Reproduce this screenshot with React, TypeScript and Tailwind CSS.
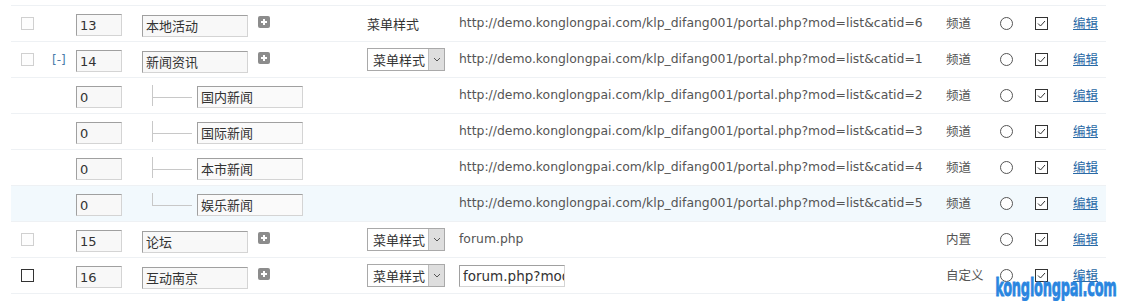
import React from "react";

type Row = {
  check?: "light" | "dark";
  toggle?: boolean;
  order: string;
  name: string;
  child?: "mid" | "last";
  plus?: boolean;
  type?: "text" | "select";
  url: string;
  urlInput?: boolean;
  kind: string;
  hl?: boolean;
};

const rows: Row[] = [
  { check: "light", order: "13", name: "本地活动", plus: true, type: "text", url: "http://demo.konglongpai.com/klp_difang001/portal.php?mod=list&catid=6", kind: "频道" },
  { check: "light", toggle: true, order: "14", name: "新闻资讯", plus: true, type: "select", url: "http://demo.konglongpai.com/klp_difang001/portal.php?mod=list&catid=1", kind: "频道" },
  { order: "0", name: "国内新闻", child: "mid", url: "http://demo.konglongpai.com/klp_difang001/portal.php?mod=list&catid=2", kind: "频道" },
  { order: "0", name: "国际新闻", child: "mid", url: "http://demo.konglongpai.com/klp_difang001/portal.php?mod=list&catid=3", kind: "频道" },
  { order: "0", name: "本市新闻", child: "mid", url: "http://demo.konglongpai.com/klp_difang001/portal.php?mod=list&catid=4", kind: "频道" },
  { order: "0", name: "娱乐新闻", child: "last", url: "http://demo.konglongpai.com/klp_difang001/portal.php?mod=list&catid=5", kind: "频道", hl: true },
  { check: "light", order: "15", name: "论坛", plus: true, type: "select", url: "forum.php", kind: "内置" },
  { check: "dark", order: "16", name: "互动南京", plus: true, type: "select", url: "forum.php?mod=forumdisplay", urlInput: true, kind: "自定义" },
];

const inputCls =
  "h-[22px] bg-[#f8f8f8] border border-[#d4d4d4] border-t-[#a0a0a0] border-l-[#a0a0a0] px-[3px] text-[13px] text-[#333] outline-none";

function Plus() {
  return (
    <span className="ml-[10px] mb-[4px] flex h-[12px] w-[12px] items-center justify-center rounded-[2px] bg-[#8c8c8c]">
      <svg width="8" height="8" viewBox="0 0 8 8">
        <path d="M4 1v6M1 4h6" stroke="#fff" strokeWidth="2" />
      </svg>
    </span>
  );
}

function MenuSelect() {
  return (
    <div className="flex h-[23px] w-[78px] items-stretch border border-[#a9a9a9] bg-white text-[13px] text-[#333]">
      <span className="flex flex-1 items-center pl-[5px]">菜单样式</span>
      <span className="flex w-[16px] items-center justify-center border-l border-[#bdbdbd] bg-[#dedede]">
        <svg width="8" height="5" viewBox="0 0 8 5">
          <path d="M1 1l3 3 3-3" stroke="#555" strokeWidth="1" fill="none" />
        </svg>
      </span>
    </div>
  );
}

function App() {
  return (
    <div
      className="relative h-[301px] w-[1121px] overflow-hidden bg-white pt-[5px] pl-[11px]"
      style={{ fontFamily: '"Noto Sans CJK SC", "DejaVu Sans", sans-serif' }}
    >
      {rows.map((r, i) => (
        <div
          key={i}
          className={`flex h-[36px] w-[1095px] items-center border-t border-[#eef1f4] ${r.hl ? "bg-[#f2f9fd]" : ""}`}
        >
          <div className="flex w-[30px] pl-[10px]">
            {r.check && (
              <span
                className={`h-[13px] w-[13px] border ${r.check === "dark" ? "border-[#333] bg-white" : "border-[#d0d0d0] bg-[#fdfdfd]"}`}
              />
            )}
          </div>
          <div className="w-[35px] pl-[11px] text-[12px] text-[#4a7aa8]" style={{ fontFamily: '"DejaVu Sans", sans-serif' }}>
            {r.toggle ? "[-]" : ""}
          </div>
          <div className="w-[66px]">
            <input readOnly value={r.order} className={`${inputCls} w-[46px]`} style={{ fontFamily: '"DejaVu Sans", sans-serif' }} />
          </div>
          <div className="flex w-[225px] items-center">
            {r.child ? (
              <>
                <div className="relative ml-[10px] h-[36px] w-[45px]">
                  <span
                    className={`absolute left-0 top-[7px] w-px bg-[#c8c8c8] ${r.child === "last" ? "h-[13px]" : "h-[21px]"}`}
                  />
                  <span className="absolute left-0 top-[19px] h-px w-[40px] bg-[#c8c8c8]" />
                </div>
                <input readOnly value={r.name} className={`${inputCls} mt-[2px] w-[106px] bg-[#fafafa]`} />
              </>
            ) : (
              <>
                <input readOnly value={r.name} className={`${inputCls} mt-[4px] w-[106px]`} />
                {r.plus && <Plus />}
              </>
            )}
          </div>
          <div className="w-[92px] text-[13px] text-[#333]">
            {r.type === "text" && <span>菜单样式</span>}
            {r.type === "select" && <MenuSelect />}
          </div>
          <div className="w-[487px] text-[12.4px] text-[#555]" style={{ fontFamily: '"DejaVu Sans", sans-serif' }}>
            {r.urlInput ? (
              <input
                readOnly
                value={r.url}
                className="h-[22px] w-[106px] border border-[#d4d4d4] border-t-[#a0a0a0] border-l-[#a0a0a0] bg-white pl-[3px] text-[13.5px] text-[#333] outline-none"
              />
            ) : (
              <span className="whitespace-nowrap">{r.url}</span>
            )}
          </div>
          <div className="w-[53px] text-[12.5px] text-[#555]">{r.kind}</div>
          <div className="w-[30px] pl-[1px]">
            <span className="block h-[13px] w-[13px] rounded-full border border-[#555] bg-white" />
          </div>
          <div className="w-[44px] pl-[6px]">
            <span className="flex h-[13px] w-[13px] items-center justify-center border border-[#333] bg-white">
              <svg width="11" height="11" viewBox="0 0 11 11">
                <path d="M2 5.5l2.5 2.5 4.5-5" stroke="#333" strokeWidth="1" fill="none" />
              </svg>
            </span>
          </div>
          <div className="text-[12.5px] text-[#2a6aa6] underline">编辑</div>
        </div>
      ))}
      <div className="flex h-[36px] w-[1095px] border-t border-[#eef1f4]" />
      <div
        className="absolute right-[4px] top-[275px] origin-right scale-x-[0.52] text-[25px] font-bold leading-none tracking-[-0.5px] text-[#2a86e0] [-webkit-text-stroke:0.8px_#2a86e0]"
        style={{ fontFamily: '"DejaVu Sans", sans-serif' }}
      >
        konglongpai.com
      </div>
    </div>
  );
}

export default App;
